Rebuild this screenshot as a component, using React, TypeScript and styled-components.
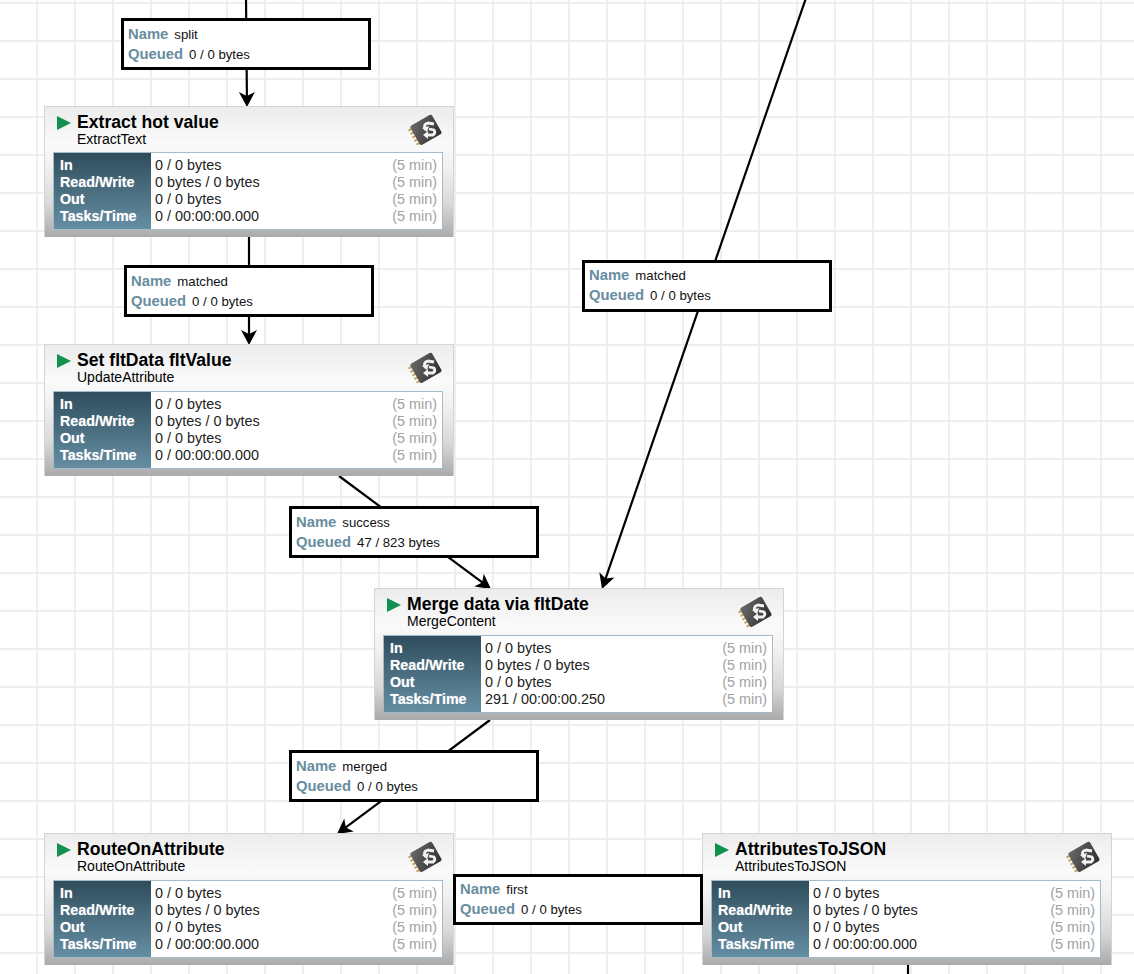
import React from 'react';
import styled, { createGlobalStyle } from 'styled-components';

const FONT = '"Liberation Sans", Arial, sans-serif';

interface ProcessorInt {
  id: string;
  x: number;
  y: number;
  h: number;
  name: string;
  type: string;
  rows: string[];
}

interface LabelInt {
  id: string;
  x: number;
  y: number;
  h: number;
  pad: number;
  name: string;
  queued: string;
}

const processors: ProcessorInt[] = [
  { id: 'a', x: 44, y: 106, h: 131, name: 'Extract hot value', type: 'ExtractText', rows: ['0 / 0 bytes', '0 bytes / 0 bytes', '0 / 0 bytes', '0 / 00:00:00.000'] },
  { id: 'b', x: 44, y: 344, h: 132, name: 'Set fltData fltValue', type: 'UpdateAttribute', rows: ['0 / 0 bytes', '0 bytes / 0 bytes', '0 / 0 bytes', '0 / 00:00:00.000'] },
  { id: 'c', x: 374, y: 588, h: 132, name: 'Merge data via fltDate', type: 'MergeContent', rows: ['0 / 0 bytes', '0 bytes / 0 bytes', '0 / 0 bytes', '291 / 00:00:00.250'] },
  { id: 'd', x: 44, y: 833, h: 132, name: 'RouteOnAttribute', type: 'RouteOnAttribute', rows: ['0 / 0 bytes', '0 bytes / 0 bytes', '0 / 0 bytes', '0 / 00:00:00.000'] },
  { id: 'e', x: 702, y: 833, h: 132, name: 'AttributesToJSON', type: 'AttributesToJSON', rows: ['0 / 0 bytes', '0 bytes / 0 bytes', '0 / 0 bytes', '0 / 00:00:00.000'] },
];

const labels: LabelInt[] = [
  { id: 'split', x: 121, y: 18, h: 52, pad: 3, name: 'split', queued: '0 / 0 bytes' },
  { id: 'matched1', x: 124, y: 265, h: 52, pad: 3, name: 'matched', queued: '0 / 0 bytes' },
  { id: 'matched2', x: 582, y: 260, h: 52, pad: 2, name: 'matched', queued: '0 / 0 bytes' },
  { id: 'success', x: 289, y: 506, h: 52, pad: 3, name: 'success', queued: '47 / 823 bytes' },
  { id: 'merged', x: 289, y: 750, h: 52, pad: 3, name: 'merged', queued: '0 / 0 bytes' },
  { id: 'first', x: 453, y: 874, h: 51, pad: 2, name: 'first', queued: '0 / 0 bytes' },
];

const statNames = ['In', 'Read/Write', 'Out', 'Tasks/Time'];

// x1, y1, x2, y2, has arrow head
const edges: [number, number, number, number, boolean][] = [
  [246, -2, 247, 107, true],
  [249, 237, 249, 345, true],
  [339, 476, 491, 589, true],
  [806, -2, 602, 589, true],
  [490, 720, 337, 834, true],
  [908, 965, 908, 980, false],
];

const renderEdge = ([x1, y1, x2, y2, arrow]: [number, number, number, number, boolean]) => {
  const deg = (Math.atan2(y2 - y1, x2 - x1) * 180) / Math.PI;
  const len = Math.hypot(x2 - x1, y2 - y1);
  const endX = x1 + ((x2 - x1) * (len - 8)) / len;
  const endY = y1 + ((y2 - y1) * (len - 8)) / len;
  return (
    <g key={`${x1}-${y1}`}>
      <line x1={x1} y1={y1} x2={arrow ? endX : x2} y2={arrow ? endY : y2} stroke="#000" strokeWidth="2.2" />
      {arrow && (
        <path d="M0 0 L-15 -8 L-11 0 L-15 8 Z" fill="#000" transform={`translate(${x2} ${y2}) rotate(${deg})`} />
      )}
    </g>
  );
};

const ChipIcon: React.FC = () => (
  <ChipSvg viewBox="0 0 38 38">
    <defs>
      <linearGradient id="chipFill" x1="0" y1="0" x2="1" y2="1">
        <stop offset="0" stopColor="#6a6a6a" />
        <stop offset="1" stopColor="#2e2e2e" />
      </linearGradient>
    </defs>
    <g transform="rotate(-30 19 19)">
      <g fill="#c8a25a">
        <rect x="4" y="9" width="4" height="2" />
        <rect x="4" y="13" width="4" height="2" />
        <rect x="4" y="17" width="4" height="2" />
        <rect x="4" y="21" width="4" height="2" />
        <rect x="4" y="25" width="4" height="2" />
      </g>
      <rect x="7" y="7" width="25" height="22" rx="2" fill="url(#chipFill)" />
    </g>
    <g fill="none" stroke="#f2f2f2" strokeWidth="2.8">
      <path d="M27 12 L21 11 Q17 12 17.5 15 L19 18" />
      <path d="M22 17 L27 18 Q29 21 26 23 L21 23" />
    </g>
    <path d="M15 16 L22 14 L20 20 Z" fill="#f2f2f2" />
    <path d="M21 19 L21 27 L16 23 Z" fill="#f2f2f2" />
  </ChipSvg>
);

const App: React.FC = () => {
  return (
    <Canvas>
      <GlobalStyle />
      <EdgeLayer viewBox="0 0 1134 974">{edges.map(renderEdge)}</EdgeLayer>
      {processors.map((p) => (
        <Processor key={p.id} $x={p.x} $y={p.y} $h={p.h}>
          <Header>
            <PlayMark />
            <Titles>
              <ProcName>{p.name}</ProcName>
              <ProcType>{p.type}</ProcType>
            </Titles>
            <ChipIcon />
          </Header>
          <Stats>
            <StatNames>
              {statNames.map((s) => (
                <StatName key={s}>{s}</StatName>
              ))}
            </StatNames>
            <StatValues>
              {p.rows.map((r, i) => (
                <StatRow key={i}>
                  <span>{r}</span>
                  <StatWindow>(5 min)</StatWindow>
                </StatRow>
              ))}
            </StatValues>
          </Stats>
        </Processor>
      ))}
      {labels.map((l) => (
        <ConnLabel key={l.id} $x={l.x} $y={l.y} $h={l.h} $pad={l.pad}>
          <ConnRow>
            <ConnKey>Name</ConnKey>
            <ConnValue>{l.name}</ConnValue>
          </ConnRow>
          <ConnRow>
            <ConnKey>Queued</ConnKey>
            <ConnValue>{l.queued}</ConnValue>
          </ConnRow>
        </ConnLabel>
      ))}
    </Canvas>
  );
};

export default App;

const GlobalStyle = createGlobalStyle`
  html, body {
    margin: 0;
    padding: 0;
    background: #fff;
    font-family: ${FONT};
    overflow: hidden;
  }
`;

const Canvas = styled.div`
  position: relative;
  width: 1134px;
  height: 974px;
  overflow: hidden;
  background-color: #fff;
  background-image: linear-gradient(90deg, #eeeeee 2px, transparent 2px),
    linear-gradient(180deg, #eeeeee 2px, transparent 2px);
  background-size: 38px 38px;
  background-position: 36px 2px;
`;

const EdgeLayer = styled.svg`
  position: absolute;
  left: 0;
  top: 0;
  width: 1134px;
  height: 974px;
`;

const Processor = styled.div<{ $x: number; $y: number; $h: number }>`
  position: absolute;
  left: ${(p) => p.$x}px;
  top: ${(p) => p.$y}px;
  width: 410px;
  height: ${(p) => p.$h}px;
  box-sizing: border-box;
  padding: 0 10px 7px 8px;
  display: flex;
  flex-direction: column;
  border: 1px solid #d4d4d4;
  border-bottom: none;
  background: linear-gradient(180deg, #ececec 0%, #fafafa 28%, #f2f2f2 45%, #d8d8d8 75%, #aaaaaa 100%);
`;

const Header = styled.div`
  display: flex;
  align-items: flex-start;
  flex: 1;
`;

const PlayMark = styled.div`
  width: 0;
  height: 0;
  margin: 9px 0 0 4px;
  border-left: 14px solid #12904f;
  border-top: 7px solid transparent;
  border-bottom: 7px solid transparent;
`;

const Titles = styled.div`
  flex: 1;
  margin: 6px 0 0 6px;
  color: #000;
`;

const ProcName = styled.div`
  font-size: 17.6px;
  font-weight: 700;
  line-height: 19px;
`;

const ProcType = styled.div`
  font-size: 14px;
  line-height: 15px;
`;

const ChipSvg = styled.svg`
  width: 38px;
  height: 38px;
  margin: 5px -2px 0 0;
  flex-shrink: 0;
`;

const Stats = styled.div`
  display: flex;
  height: 78px;
  flex-shrink: 0;
  box-sizing: border-box;
  border: 1px solid #a3bcc8;
`;

const StatNames = styled.div`
  width: 97px;
  box-sizing: border-box;
  padding: 3.5px 0 0 6px;
  flex-shrink: 0;
  background: linear-gradient(180deg, #2f4d5c 0%, #658ea3 100%);
  text-shadow: 0 0 1px rgba(255, 255, 255, 0.5);
`;

const StatName = styled.div`
  height: 17.3px;
  line-height: 17.3px;
  font-size: 14.3px;
  font-weight: 700;
  color: #fff;
`;

const StatValues = styled.div`
  flex: 1;
  box-sizing: border-box;
  padding: 3.5px 5px 0 4px;
  background: #fff;
`;

const StatRow = styled.div`
  display: flex;
  justify-content: space-between;
  height: 17.3px;
  line-height: 17.3px;
  font-size: 14.4px;
  color: #222;
`;

const StatWindow = styled.span`
  color: #a3a3a3;
`;

const ConnLabel = styled.div<{ $x: number; $y: number; $h: number; $pad: number }>`
  position: absolute;
  left: ${(p) => p.$x}px;
  top: ${(p) => p.$y}px;
  width: 250px;
  height: ${(p) => p.$h}px;
  box-sizing: border-box;
  padding: ${(p) => p.$pad}px 0 0 4px;
  display: flex;
  flex-direction: column;
  background: #fff;
  border: 3px solid #000;
`;

const ConnRow = styled.div`
  display: flex;
  align-items: baseline;
  height: 20px;
  line-height: 20px;
`;

const ConnKey = styled.span`
  font-size: 14.8px;
  font-weight: 700;
  color: #688da0;
  margin-right: 6px;
`;

const ConnValue = styled.span`
  font-size: 13.2px;
  color: #111;
`;
